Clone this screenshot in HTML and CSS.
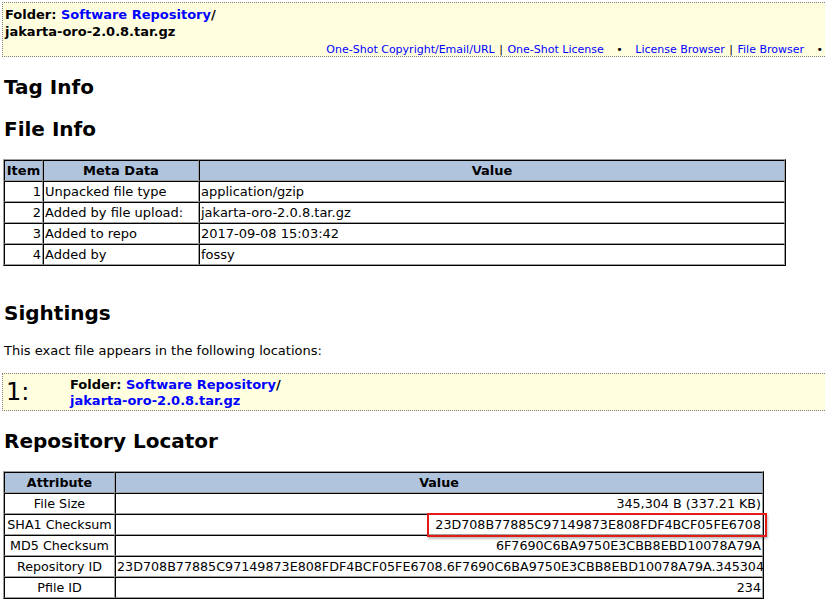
FILE: index.html
```html
<!DOCTYPE html>
<html lang="en">
<head>
    <meta charset="UTF-8">
    <meta name="viewport" content="width=device-width, initial-scale=1.0">
    <title>View Info</title>
    <link rel="stylesheet" href="styles.css">
</head>
<body>
    <div class="folder-box">
        <div class="path">
            Folder: <a href="#">Software Repository</a>/<br>
            jakarta-oro-2.0.8.tar.gz
        </div>
        <div class="menu">
            <a href="#">One-Shot Copyright/Email/URL</a> | <a href="#">One-Shot License</a>
            <span class="dot">&bull;</span>
            <a href="#">License Browser</a> | <a href="#">File Browser</a>
            <span class="dot">&bull;</span>
        </div>
    </div>

    <h2>Tag Info</h2>
    <h2>File Info</h2>

    <table class="info info-file">
        <tr>
            <th class="col-item">Item</th>
            <th class="col-meta">Meta Data</th>
            <th>Value</th>
        </tr>
        <tr><td class="num">1</td><td>Unpacked file type</td><td>application/gzip</td></tr>
        <tr><td class="num">2</td><td>Added by file upload:</td><td>jakarta-oro-2.0.8.tar.gz</td></tr>
        <tr><td class="num">3</td><td>Added to repo</td><td>2017-09-08 15:03:42</td></tr>
        <tr><td class="num">4</td><td>Added by</td><td>fossy</td></tr>
    </table>

    <h2>Sightings</h2>
    <p class="intro">This exact file appears in the following locations:</p>

    <div class="sighting">
        <div class="sighting-num">1:</div>
        <div class="path">
            Folder: <a href="#">Software Repository</a>/<br>
            <a href="#">jakarta-oro-2.0.8.tar.gz</a>
        </div>
    </div>

    <h2>Repository Locator</h2>

    <table class="info info-repo">
        <tr>
            <th class="col-attr">Attribute</th>
            <th>Value</th>
        </tr>
        <tr><td class="attr">File Size</td><td class="val">345,304 B (337.21 KB)</td></tr>
        <tr><td class="attr">SHA1 Checksum</td><td class="val"><span class="highlight">23D708B77885C97149873E808FDF4BCF05FE6708</span></td></tr>
        <tr><td class="attr">MD5 Checksum</td><td class="val">6F7690C6BA9750E3CBB8EBD10078A79A</td></tr>
        <tr><td class="attr">Repository ID</td><td class="val">23D708B77885C97149873E808FDF4BCF05FE6708.6F7690C6BA9750E3CBB8EBD10078A79A.345304</td></tr>
        <tr><td class="attr">Pfile ID</td><td class="val">234</td></tr>
    </table>
</body>
</html>
```

FILE: styles.css
```css
html {
    overflow: hidden;
}
body {
    font-family: 'DejaVu Sans', Verdana, sans-serif;
    font-size: 13px;
    color: #000;
    background: #fff;
    margin: 0;
    padding: 0 0 0 2px;
}
a {
    color: #0000ff;
    text-decoration: none;
}
.folder-box {
    margin: 2px -12px 0 0;
    height: 53px;
    border: 1px dotted #808080;
    background: #ffffe0;
    padding: 0 2px;
}
.folder-box .path {
    padding-top: 3px;
    line-height: 17px;
}
.path {
    font-weight: bold;
    line-height: 15px;
}
.menu {
    margin-top: 3px;
    text-align: right;
    font-size: 11px;
    line-height: 13px;
    padding-right: 3px;
    word-spacing: 1px;
}
.menu a {
    word-spacing: 0;
}
.dot {
    margin: 0 8px;
}
h2 {
    font-size: 20px;
    line-height: 24px;
    margin: 18px 0 18px 2px;
}
.info {
    border-collapse: separate;
    border-spacing: 0;
    border: 1px solid;
    border-color: #a0a0a0 #000 #000 #a0a0a0;
    margin-left: 1px;
    table-layout: fixed;
}
.info th, .info td {
    border: 1px solid;
    border-color: #000 #a0a0a0 #a0a0a0 #000;
    padding: 2px 1px;
    line-height: 15px;
    white-space: nowrap;
}
.info th {
    background: #b0c4de;
    text-align: center;
}
.info-file {
    width: 783px;
    margin-bottom: 35px;
}
.info-file td {
    text-align: left;
}
.col-item {
    width: 35px;
}
.col-meta {
    width: 152px;
}
.info-file td.num {
    text-align: right;
}
.intro {
    margin: 18px 0 15px 2px;
    line-height: 15px;
}
.sighting {
    display: flex;
    margin-right: -12px;
    border: 1px dotted #808080;
    background: #ffffe0;
    height: 36px;
}
.sighting-num {
    width: 64px;
    padding-left: 3px;
    font-size: 24px;
    line-height: 36px;
}
.sighting .path {
    padding-top: 3px;
    line-height: 16px;
}
.info-repo {
    width: 761px;
    font-size: 12.7px;
}
.col-attr {
    width: 107px;
}
.info-repo td.attr {
    text-align: center;
}
.info-repo td.val {
    text-align: right;
}
.highlight {
    position: relative;
}
.highlight::after {
    content: "";
    position: absolute;
    left: -8px;
    right: -6px;
    top: -4px;
    bottom: -5px;
    border: 2px solid #e41b17;
    box-shadow: 1px 2px 2px rgba(0, 0, 0, 0.25);
}
```
